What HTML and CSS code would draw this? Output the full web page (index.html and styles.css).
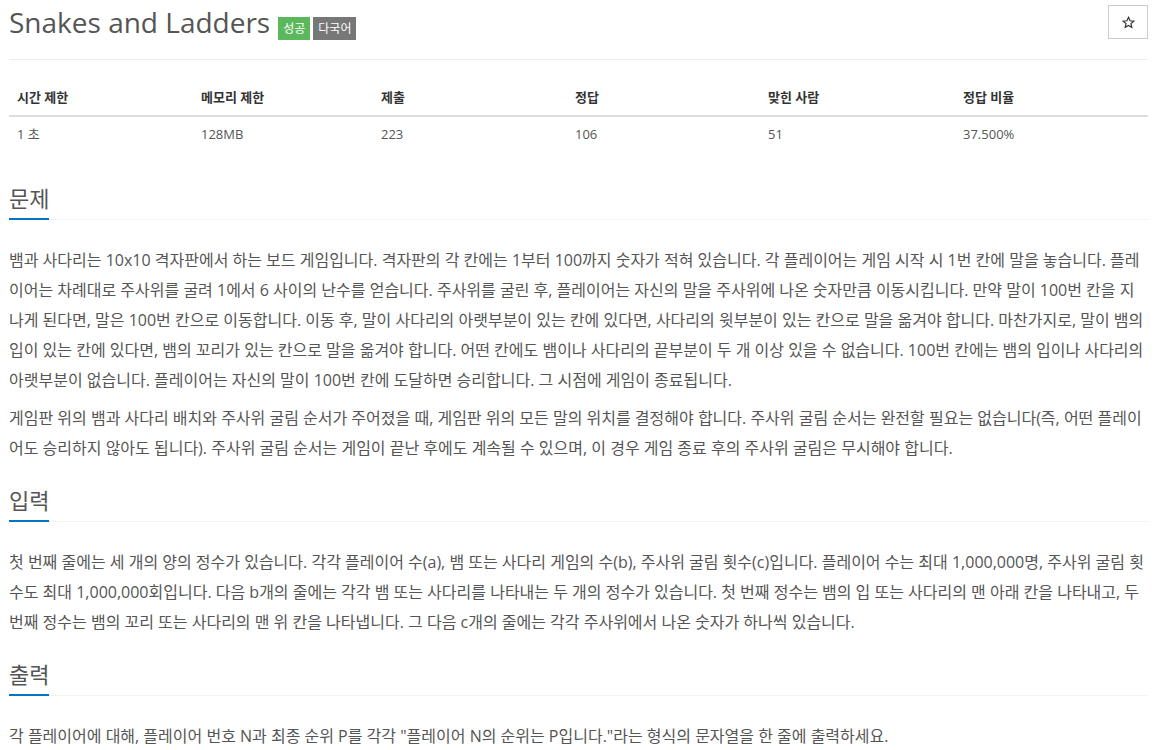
FILE: index.html
```html
<!DOCTYPE html>
<html lang="ko">

<head>
    <meta charset="UTF-8" />
    <meta name="viewport" content="width=device-width, initial-scale=1.0" />
    <title>Snakes and Ladders</title>
    <link rel="stylesheet" href="styles.css">
</head>

<body>
    <!-- 문제 제목 -->
    <div class="page-header">
        <div class="title-row">
            <h1 class="problem-title">Snakes and Ladders</h1>
            <span class="label label-success">성공</span>
            <span class="label label-default">다국어</span>
        </div>
        <button class="star-btn" type="button" aria-label="즐겨찾기">
            <svg width="13" height="13" viewBox="0 0 24 24">
                <path d="M12 2.5l2.9 6.3 6.9.7-5.2 4.6 1.5 6.8L12 17.4l-6.1 3.5 1.5-6.8-5.2-4.6 6.9-.7z"
                    fill="none" stroke="#333" stroke-width="2.2" stroke-linejoin="miter" />
            </svg>
        </button>
    </div>

    <!-- 제한 / 통계 -->
    <table class="problem-info">
        <thead>
            <tr>
                <th>시간 제한</th>
                <th>메모리 제한</th>
                <th>제출</th>
                <th>정답</th>
                <th>맞힌 사람</th>
                <th>정답 비율</th>
            </tr>
        </thead>
        <tbody>
            <tr>
                <td>1 초</td>
                <td>128MB</td>
                <td>223</td>
                <td>106</td>
                <td>51</td>
                <td>37.500%</td>
            </tr>
        </tbody>
    </table>

    <section class="problem-section">
        <div class="headline">
            <h2><span>문제</span></h2>
        </div>
        <div class="problem-text">
            <p>뱀과 사다리는 10x10 격자판에서 하는 보드 게임입니다. 격자판의 각 칸에는 1부터 100까지 숫자가 적혀 있습니다. 각 플레이어는 게임 시작 시 1번 칸에 말을 놓습니다. 플레이어는 차례대로 주사위를 굴려 1에서 6 사이의 난수를 얻습니다. 주사위를 굴린 후, 플레이어는 자신의 말을 주사위에 나온 숫자만큼 이동시킵니다. 만약 말이 100번 칸을 지나게 된다면, 말은 100번 칸으로 이동합니다. 이동 후, 말이 사다리의 아랫부분이 있는 칸에 있다면, 사다리의 윗부분이 있는 칸으로 말을 옮겨야 합니다. 마찬가지로, 말이 뱀의 입이 있는 칸에 있다면, 뱀의 꼬리가 있는 칸으로 말을 옮겨야 합니다. 어떤 칸에도 뱀이나 사다리의 끝부분이 두 개 이상 있을 수 없습니다. 100번 칸에는 뱀의 입이나 사다리의 아랫부분이 없습니다. 플레이어는 자신의 말이 100번 칸에 도달하면 승리합니다. 그 시점에 게임이 종료됩니다.</p>
            <p>게임판 위의 뱀과 사다리 배치와 주사위 굴림 순서가 주어졌을 때, 게임판 위의 모든 말의 위치를 결정해야 합니다. 주사위 굴림 순서는 완전할 필요는 없습니다(즉, 어떤 플레이어도 승리하지 않아도 됩니다). 주사위 굴림 순서는 게임이 끝난 후에도 계속될 수 있으며, 이 경우 게임 종료 후의 주사위 굴림은 무시해야 합니다.</p>
        </div>
    </section>

    <section class="problem-section">
        <div class="headline">
            <h2><span>입력</span></h2>
        </div>
        <div class="problem-text">
            <p>첫 번째 줄에는 세 개의 양의 정수가 있습니다. 각각 플레이어 수(a), 뱀 또는 사다리 게임의 수(b), 주사위 굴림 횟수(c)입니다. 플레이어 수는 최대 1,000,000명, 주사위 굴림 횟수도 최대 1,000,000회입니다. 다음 b개의 줄에는 각각 뱀 또는 사다리를 나타내는 두 개의 정수가 있습니다. 첫 번째 정수는 뱀의 입 또는 사다리의 맨 아래 칸을 나타내고, 두 번째 정수는 뱀의 꼬리 또는 사다리의 맨 위 칸을 나타냅니다. 그 다음 c개의 줄에는 각각 주사위에서 나온 숫자가 하나씩 있습니다.</p>
        </div>
    </section>

    <section class="problem-section">
        <div class="headline">
            <h2><span>출력</span></h2>
        </div>
        <div class="problem-text">
            <p>각 플레이어에 대해, 플레이어 번호 N과 최종 순위 P를 각각 "플레이어 N의 순위는 P입니다."라는 형식의 문자열을 한 줄에 출력하세요.</p>
        </div>
    </section>
</body>

</html>
```

FILE: styles.css
```css
html,
body {
    margin: 0;
    padding: 0;
    background: #fff;
}

body {
    padding: 0 9px;
    font-family: 'Open Sans', 'Noto Sans CJK KR', sans-serif;
    color: #555;
    font-size: 13px;
}

/* 제목 영역 */
.page-header {
    display: flex;
    justify-content: space-between;
    align-items: flex-start;
    padding-top: 5px;
    height: 60px;
    box-sizing: border-box;
    border-bottom: 1px solid #eee;
}

.title-row {
    display: flex;
    align-items: flex-start;
}

.problem-title {
    margin: 0;
    font-size: 28px;
    line-height: 34px;
    font-weight: 400;
    color: #555;
}

.label {
    display: inline-block;
    margin-top: 12px;
    height: 23px;
    line-height: 23px;
    padding: 0 5px;
    font-size: 12px;
    color: #fff;
}

.label-success {
    margin-left: 8px;
    background-color: #5cb85c;
}

.label-default {
    margin-left: 3px;
    background-color: #777;
}

.star-btn {
    width: 40px;
    height: 34px;
    padding: 0;
    margin: 0;
    display: flex;
    justify-content: center;
    align-items: center;
    background: #fff;
    border: 1px solid #ccc;
    cursor: pointer;
}

/* 표 */
.problem-info {
    width: 100%;
    margin: 20px 0 35px;
    border-collapse: collapse;
    table-layout: fixed;
}

.problem-info th,
.problem-info td {
    padding: 8px;
    line-height: 18.5px;
    text-align: left;
}

.problem-info th {
    color: #333;
    font-weight: 700;
    border-bottom: 2px solid #ddd;
}

.problem-info td {
    color: #555;
}

.problem-info th:nth-child(1) { width: 168px; }
.problem-info th:nth-child(2) { width: 164px; }
.problem-info th:nth-child(3) { width: 178px; }
.problem-info th:nth-child(4) { width: 177px; }
.problem-info th:nth-child(5) { width: 179px; }

/* 본문 섹션 */
.problem-section {
    margin-top: 25px;
}

.headline {
    border-bottom: 1px dotted #e4e9f0;
    margin-bottom: 25px;
}

.headline h2 {
    margin: 0;
    font-size: 22px;
    line-height: 24px;
    font-weight: 400;
    color: #555;
}

.headline h2 span {
    display: inline-block;
    padding-bottom: 8px;
    border-bottom: 2px solid #0076c0;
    margin-bottom: -1px;
}

.problem-text {
    font-size: 16px;
    line-height: 30px;
    color: #555;
}

.problem-text p {
    margin: 0 0 8px;
}
```
